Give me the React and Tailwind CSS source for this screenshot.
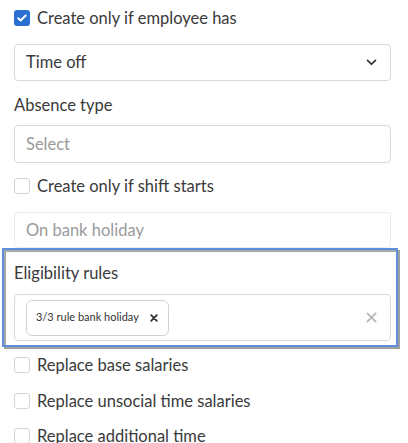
const checks = ["Replace base salaries", "Replace unsocial time salaries", "Replace additional time"];

function Checkbox({ checked }) {
  if (checked) {
    return (
      <span className="flex h-4 w-4 shrink-0 items-center justify-center rounded-[3px] bg-[#2a6fd2]">
        <svg viewBox="0 0 16 16" className="h-[12px] w-[12px]" fill="none">
          <path d="M3 8.3l3.1 3L13 4.6" stroke="white" strokeWidth="2.6" strokeLinecap="round" strokeLinejoin="round" />
        </svg>
      </span>
    );
  }
  return <span className="h-4 w-4 shrink-0 rounded-[3px] border border-[#d4d4d4] bg-white" />;
}

function CheckRow({ checked, label, className = "" }) {
  return (
    <div className={`flex h-4 items-center gap-[7px] ${className}`}>
      <Checkbox checked={checked} />
      <span className="whitespace-nowrap text-[16.5px] leading-4 text-[#3a3a3a]">{label}</span>
    </div>
  );
}

export default function App() {
  return (
    <div className="h-[443px] w-[408px] overflow-hidden bg-white font-['Lato',sans-serif] text-[#3a3a3a]">
      <div className="pl-[14px] pr-[17px] pt-[10px]">
        <CheckRow checked label="Create only if employee has" />

        <div className="mt-[18px] flex h-[37px] items-center justify-between rounded-[4px] border border-[#d9d9d9] pl-[11px] pr-[13px]">
          <span className="text-[16.5px]">Time off</span>
          <svg viewBox="0 0 12 8" className="h-[7px] w-[11px]" fill="none">
            <path d="M1.5 1.5L6 6l4.5-4.5" stroke="#333" strokeWidth="2" strokeLinecap="round" strokeLinejoin="round" />
          </svg>
        </div>

        <div className="mt-[14px] text-[16.5px] leading-5">Absence type</div>

        <div className="mt-[10px] flex h-[38px] items-center rounded-[4px] border border-[#d9d9d9] pl-[11px]">
          <span className="text-[16.5px] text-[#9a9a9a]">Select</span>
        </div>

        <CheckRow label="Create only if shift starts" className="mt-[15px]" />

        <div className="mt-[18px] flex h-[36px] items-center rounded-[4px] border border-[#ececec] pl-[11px]">
          <span className="text-[16.5px] text-[#9a9a9a]">On bank holiday</span>
        </div>

        <div className="-ml-[12px] -mr-[7px] border-2 border-[#5e8fd8] pb-[4px] pl-[10px] pr-[5px] pt-[13px] shadow-[2px_2px_0_#a0a0a0,inset_2px_2px_0_#a8a8a8]">
          <div className="text-[16.5px] leading-5">Eligibility rules</div>
          <div className="mt-[11px] flex h-[47px] items-center justify-between rounded-[4px] border border-[#d9d9d9] pl-[11px] pr-[13px]">
            <div className="flex h-[36px] items-center gap-[11px] rounded-[6px] border border-[#d2d2d2] pl-[9px] pr-[10px]">
              <span className="text-[11px] text-[#333]">3/3 rule bank holiday</span>
              <svg viewBox="0 0 10 10" className="h-[8px] w-[8px]" fill="none">
                <path d="M1.5 1.5l7 7M8.5 1.5l-7 7" stroke="#333" strokeWidth="2.2" strokeLinecap="round" />
              </svg>
            </div>
            <svg viewBox="0 0 12 12" className="h-[11px] w-[11px]" fill="none">
              <path d="M1.5 1.5l9 9M10.5 1.5l-9 9" stroke="#b8b8b8" strokeWidth="2" strokeLinecap="round" />
            </svg>
          </div>
        </div>

        <CheckRow label={checks[0]} className="mt-[10px]" />
        <CheckRow label={checks[1]} className="mt-[20px]" />
        <CheckRow label={checks[2]} className="mt-[19px]" />
      </div>
    </div>
  );
}
